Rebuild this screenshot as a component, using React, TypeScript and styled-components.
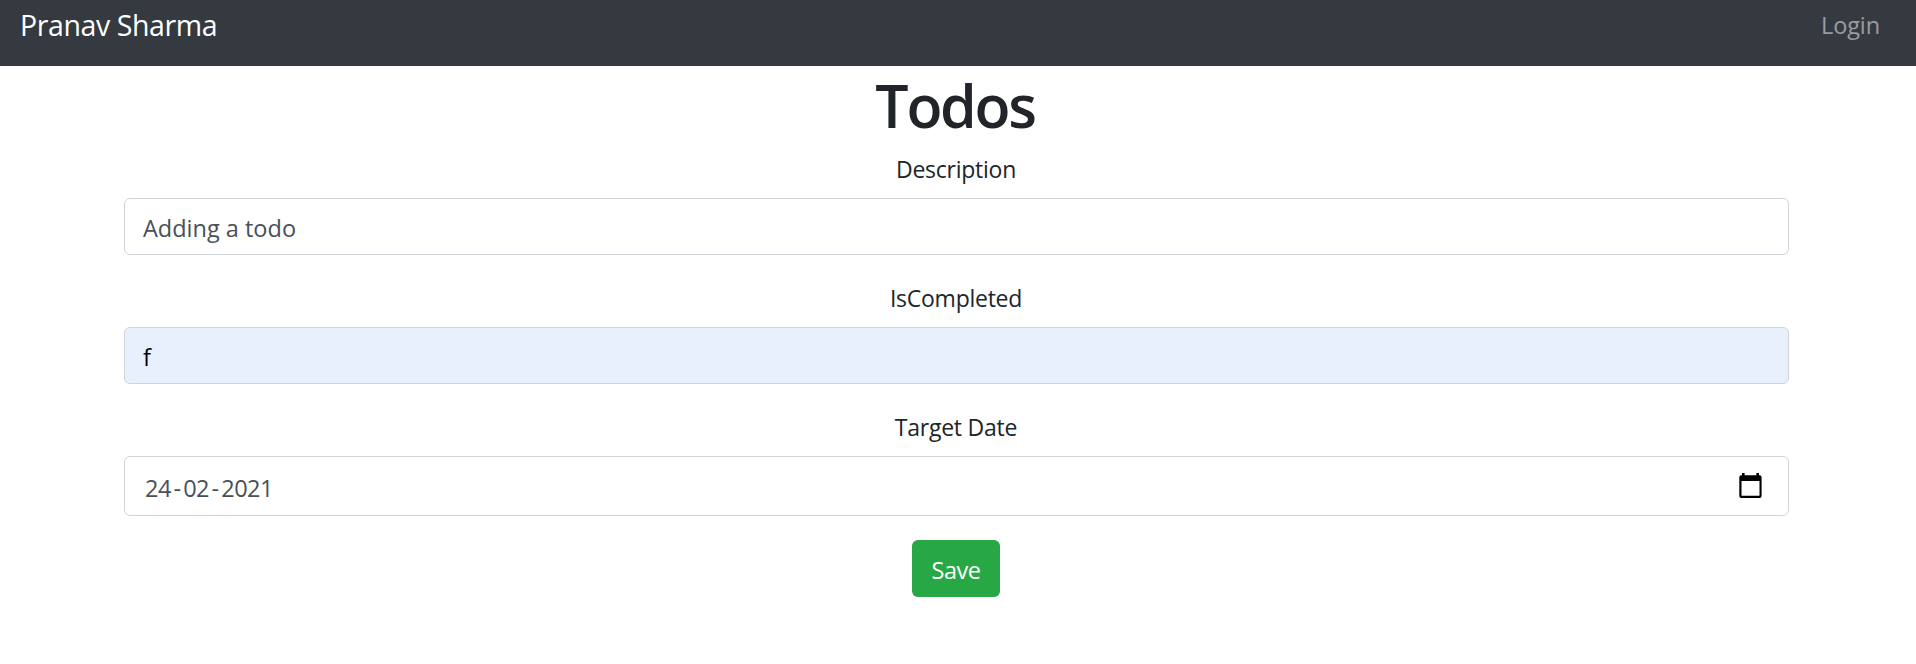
import React from "react";
import styled, { createGlobalStyle } from "styled-components";

const Global = createGlobalStyle`
  *, *::before, *::after { box-sizing: border-box; }
  body {
    margin: 0; background: #fff; color: #212529;
    font: 400 23.5px/36px "Open Sans", "Noto Sans", sans-serif;
  }
`;
const Nav = styled.nav`
  height: 66px; padding: 0 36px 0 20px; background: #343a40;
  display: flex; justify-content: space-between; align-items: flex-start;
`;
const Brand = styled.span`
  font-size: 28.5px; line-height: 51px; color: #fff; letter-spacing: -0.4px;
`;
const NavLink = styled.span`
  line-height: 51px; color: rgba(255, 255, 255, 0.5); letter-spacing: -0.1px;
`;
const Main = styled.main`
  padding: 0 127px 0 124px; display: flex; flex-direction: column; align-items: center;
`;
const Title = styled.h1`
  margin: 0; padding: 3px 3px 9px 0; font-size: 59px; line-height: 72px; font-weight: 600;
  letter-spacing: -2.3px;
`;
const Group = styled.div`
  width: 100%; margin-bottom: 24px;
`;
const Label = styled.label`
  display: block; text-align: center; padding: 1px 1px 0 0; margin-bottom: 11px;
  font-size: 23px; letter-spacing: -0.25px;
`;
const Field = styled.div<{ $filled?: boolean; $date?: boolean }>`
  height: ${(p) => (p.$date ? 60 : 57)}px;
  padding: ${(p) => (p.$date ? "3px 26px 0 20px" : "2px 18px 0")};
  border: 1px solid #ced4da; border-radius: 6px;
  background: ${(p) => (p.$filled ? "#e8f0fe" : "#fff")};
  color: ${(p) => (p.$filled ? "#000" : "#495057")};
  display: flex; align-items: center; justify-content: space-between;
`;
const DateText = styled.span`
  letter-spacing: -0.5px;
`;
const Dash = styled.span`
  padding: 0 2.6px;
`;
const Save = styled.button`
  font: inherit; letter-spacing: -0.5px; color: #fff; background: #28a745;
  border: 0; border-radius: 6px; height: 57px; width: 88px; padding: 2px 0 0;
  margin-right: 1px;
`;
const Calendar = styled.svg`
  margin-top: -4px;
`;

const CalendarIcon = () => (
  <Calendar width="23" height="25" viewBox="0 0 23 25">
    <path
      fillRule="evenodd"
      d="M3 0h2.6v2.3h11.8V0H20v2.3h.6a2 2 0 0 1 2 2V23a2 2 0 0 1-2 2H2.3a2 2 0 0 1-2-2V4.300a2 2 0 0 1 2-2H3zM2.500 8v14.800h18V8z"
      fill="#000"
    />
  </Calendar>
);

export default function App() {
  return (
    <>
      <Global />
      <Nav>
        <Brand>Pranav Sharma</Brand>
        <NavLink>Login</NavLink>
      </Nav>
      <Main>
        <Title>Todos</Title>
        <Group>
          <Label>Description</Label>
          <Field>Adding a todo</Field>
        </Group>
        <Group>
          <Label>IsCompleted</Label>
          <Field $filled>f</Field>
        </Group>
        <Group>
          <Label>Target Date</Label>
          <Field $date>
            <DateText>24<Dash>-</Dash>02<Dash>-</Dash>2021</DateText>
            <CalendarIcon />
          </Field>
        </Group>
        <Save>Save</Save>
      </Main>
    </>
  );
}
